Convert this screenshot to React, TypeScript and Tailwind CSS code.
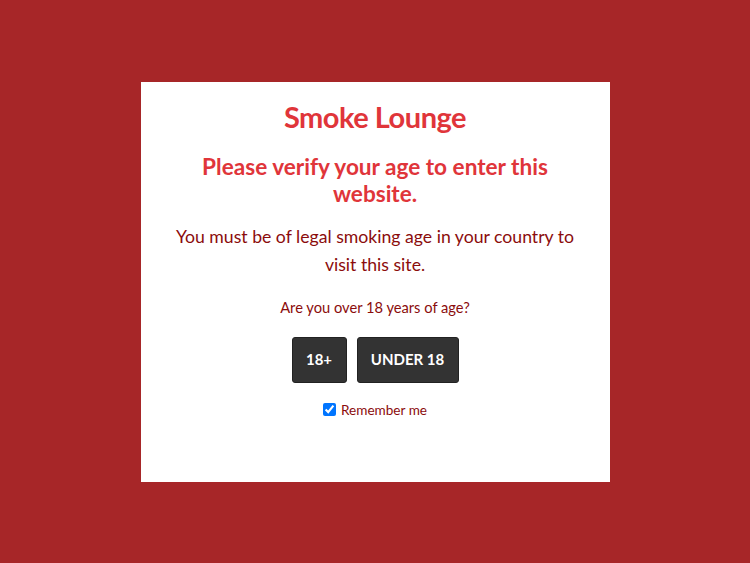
import React from "react";

export default function App() {
  return (
    <div
      className="w-[750px] h-[563px] bg-[#a72628] flex items-center justify-center"
      style={{ fontFamily: "Lato, 'Noto Sans', sans-serif" }}
    >
      <div className="w-[469px] h-[400px] bg-white flex flex-col items-center text-center px-6 pt-[15px]">
        <h1 className="text-[29px] leading-[40px] font-bold text-[#e0353a] tracking-[-0.5px]">
          Smoke Lounge
        </h1>
        <h2 className="mt-[16px] text-[22.6px] leading-[27px] font-bold text-[#e0353a] w-[370px]">
          Please verify your age to enter this website.
        </h2>
        <p className="mt-[16px] text-[17.65px] leading-[28px] text-[#8b0c0c]">
          You must be of legal smoking age in your country to visit this site.
        </p>
        <p className="mt-[18px] text-[14.7px] leading-[20px] text-[#8b0c0c]">
          Are you over 18 years of age?
        </p>
        <div className="mt-[20px] flex gap-[10px]">
          <button className="h-[46px] w-[55px] rounded-[3px] bg-[#333333] border border-[#222] text-white text-[15px] font-bold">
            18+
          </button>
          <button className="h-[46px] w-[102px] rounded-[3px] bg-[#333333] border border-[#222] text-white text-[15px] font-bold">
            UNDER 18
          </button>
        </div>
        <label className="mt-[17px] flex items-center gap-[5px] text-[13.6px] text-[#8b0c0c]">
          <input type="checkbox" defaultChecked className="w-[13px] h-[13px] accent-[#0075ff]" />
          Remember me
        </label>
      </div>
    </div>
  );
}
